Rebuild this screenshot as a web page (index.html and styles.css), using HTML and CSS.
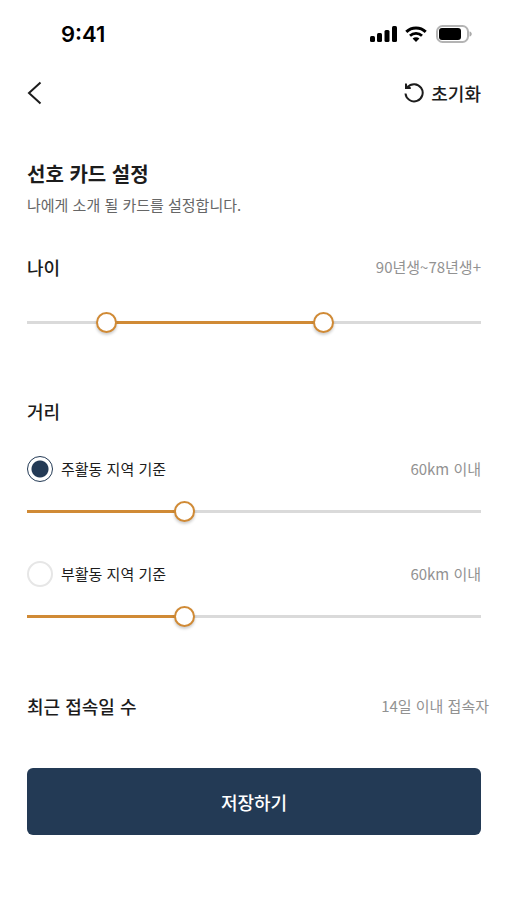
FILE: index.html
```
<!DOCTYPE html>
<html lang="ko">
	<head>
		<meta charset="utf-8"/>
		<title>선호 카드 설정</title>
		<meta name="viewport" content="width=device-width, initial-scale=1"/>
		<link rel="stylesheet" href="styles.css">
	</head>
	<body>
		<div class="status-bar">
			<span class="status-time">9:41</span>
			<div class="status-icons">
				<svg width="27" height="17" viewBox="0 0 27 17">
					<rect x="0" y="10" width="5" height="6" rx="1.5"/>
					<rect x="7" y="7" width="5" height="9" rx="1.5"/>
					<rect x="14.5" y="4" width="5" height="12" rx="1.5"/>
					<rect x="22" y="0" width="5" height="16" rx="1.5"/>
				</svg>
				<svg class="wifi" width="22" height="17" viewBox="0 0 22 17">
					<path d="M1.3 5.8C6.7.6 15.3.6 20.7 5.8" fill="none" stroke="#000" stroke-width="3"/>
					<path d="M5 9.7C8.4 6.5 13.6 6.5 17 9.7" fill="none" stroke="#000" stroke-width="2.8"/>
					<path d="M7.6 12.6C9.5 10.9 12.5 10.9 14.4 12.6L11 16z"/>
				</svg>
				<svg width="37" height="18" viewBox="0 0 37 18">
					<rect x="1" y="1" width="31" height="16" rx="5.5" fill="#fff" stroke="#b4b4b4" stroke-width="2"/>
					<rect x="3" y="3" width="22" height="12" rx="3"/>
					<path d="M33.5 6.5C36.5 7 36.5 11 33.5 11.5z" fill="#aaa"/>
				</svg>
			</div>
		</div>
		<div class="top-nav">
			<button type="button" class="back-btn" aria-label="뒤로">
				<svg width="16" height="24" viewBox="0 0 16 24"><path d="M13.5 1.5L2 12L13.5 22.5" fill="none" stroke="#1c1c1c" stroke-width="2"/></svg>
			</button>
			<button type="button" class="reset-btn">
				<svg width="20" height="20" viewBox="0 0 20 20">
					<path d="M3.5 4.2A8.6 8.6 0 1 1 1.5 10.5" fill="none" stroke="#1c1c1c" stroke-width="2"/>
					<path d="M1 .5L2.800.5L3.400 3.600L6.800 4.200V6H1z" fill="#1c1c1c"/>
				</svg>
				초기화
			</button>
		</div>
		<form class="settings">
			<h1 class="heading-txt">선호 카드 설정</h1>
			<p class="instruct-txt">나에게 소개 될 카드를 설정합니다.</p>

			<div class="row">
				<h2 class="section-txt">나이</h2>
				<span class="value-txt">90년생~78년생+</span>
			</div>
			<div class="range-block age-range" style="--from:16%;--to:66%">
				<input type="range" class="range" min="0" max="100" value="16" aria-label="최소 나이"/>
				<input type="range" class="range" min="0" max="100" value="66" aria-label="최대 나이"/>
			</div>

			<h2 class="section-txt">거리</h2>
			<div class="row area-row">
				<label class="radio-label"><input type="radio" name="area" class="radio" checked/>주활동 지역 기준</label>
				<span class="value-txt">60km 이내</span>
			</div>
			<div class="range-block" style="--from:0%;--to:34%">
				<input type="range" class="range" min="0" max="100" value="34" aria-label="주활동 지역 거리"/>
			</div>
			<div class="row area-row">
				<label class="radio-label"><input type="radio" name="area" class="radio"/>부활동 지역 기준</label>
				<span class="value-txt">60km 이내</span>
			</div>
			<div class="range-block" style="--from:0%;--to:34%">
				<input type="range" class="range" min="0" max="100" value="34" aria-label="부활동 지역 거리"/>
			</div>

			<div class="row recent-row">
				<h2 class="section-txt">최근 접속일 수</h2>
				<span class="value-txt">14일 이내 접속자</span>
			</div>
			<button type="button" class="save-btn">저장하기</button>
		</form>
	</body>
</html>
```
FILE: styles.css
```
*{box-sizing: border-box;}
body{margin: 0;background: #fff;color: #1c1c1c;font-family: "Noto Sans CJK KR", sans-serif;font-size: 15px;line-height: 26px;}
h1, h2, p{margin: 0;}
button{border: 0;padding: 0;background: none;color: inherit;font-family: inherit;cursor: pointer;}

.status-bar{display: flex;align-items: center;justify-content: space-between;height: 68px;padding: 0 34px 0 61px;}
.status-time{font-family: Inter, sans-serif;font-size: 22px;font-weight: 600;color: #000;}
.status-icons{display: flex;align-items: center;}
.wifi{margin: 0 9px 0 8px;}

.top-nav{display: flex;align-items: center;justify-content: space-between;height: 50px;padding: 0 26px 0 27px;}
.back-btn, .reset-btn{display: flex;align-items: center;}
.reset-btn{gap: 7px;font-size: 18px;font-weight: 500;line-height: 26px;}

.settings{padding: 41px 26px 40px 27px;}
.heading-txt{font-size: 20px;font-weight: 700;line-height: 30px;}
.instruct-txt{margin: 4px 0 37px;line-height: 24px;color: #666;}
.section-txt{font-size: 18px;font-weight: 500;line-height: 26px;}
.row{display: flex;align-items: center;justify-content: space-between;}
.value-txt{color: #929292;}

.range-block{position: relative;height: 21px;background: linear-gradient(to right, #dadada var(--from), #d08a35 var(--from), #d08a35 var(--to), #dadada var(--to)) center / 100% 3px no-repeat;}
.age-range{margin: 32px 0 65px;}
.range{appearance: none;-webkit-appearance: none;position: absolute;top: 0;left: 0;width: 100%;height: 21px;margin: 0;background: none;pointer-events: none;}
.range::-webkit-slider-thumb{-webkit-appearance: none;width: 21px;height: 21px;border: 2px solid #d08a35;border-radius: 50%;background: #fff;box-shadow: 0 2px 3px rgba(0,0,0,0.2);cursor: pointer;pointer-events: auto;}

.area-row{margin: 32px 0 19px;}
.range-block + .area-row{margin-top: 39px;}
.radio-label{display: flex;align-items: center;gap: 8px;}
.radio{appearance: none;-webkit-appearance: none;width: 26px;height: 26px;margin: 0;border: 2px solid #e6e6e6;border-radius: 50%;background: #fff;}
.radio:checked{border: 1px solid #233a55;background: radial-gradient(circle, #233a55 8px, #fff 9px);}

.recent-row{margin: 66px -8px 49px 0;}
.save-btn{display: block;width: 100%;height: 67px;border-radius: 6px;background: #233a55;color: #fff;font-size: 18px;font-weight: 500;}
```
